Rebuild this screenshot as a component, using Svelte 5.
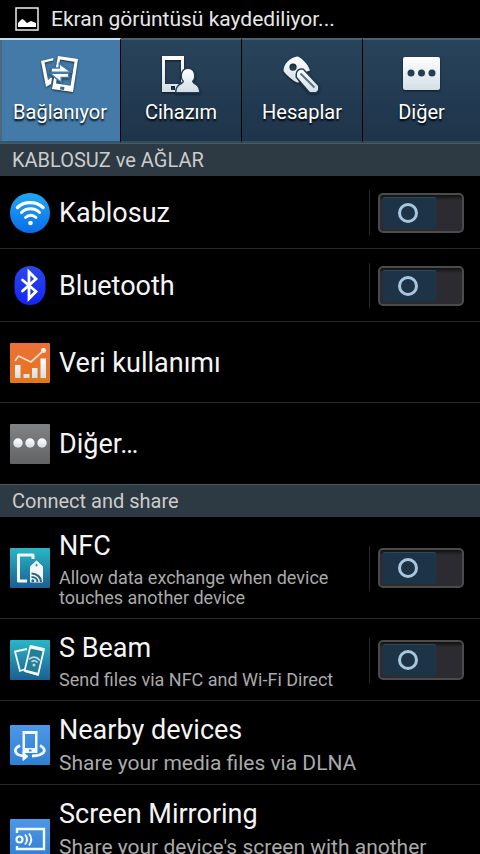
<script>
	let activeTab = $state('connections');

	const tabs = [
		{ id: 'connections', label: 'Bağlanıyor' },
		{ id: 'device', label: 'Cihazım' },
		{ id: 'accounts', label: 'Hesaplar' },
		{ id: 'more', label: 'Diğer' }
	];

	let sections = $state([
		{
			title: 'KABLOSUZ ve AĞLAR',
			items: [
				{ id: 'wifi', title: 'Kablosuz', toggle: true, on: false },
				{ id: 'bluetooth', title: 'Bluetooth', toggle: true, on: false },
				{ id: 'data', title: 'Veri kullanımı', tall: true },
				{ id: 'other', title: 'Diğer…', tall: true }
			]
		},
		{
			title: 'Connect and share',
			items: [
				{
					id: 'nfc',
					title: 'NFC',
					text: 'Allow data exchange when device touches another device',
					toggle: true,
					on: false
				},
				{
					id: 'sbeam',
					title: 'S Beam',
					text: 'Send files via NFC and Wi-Fi Direct',
					toggle: true,
					on: false
				},
				{
					id: 'nearby',
					title: 'Nearby devices',
					text: 'Share your media files via DLNA',
					large: true
				},
				{
					id: 'mirroring',
					title: 'Screen Mirroring',
					text: "Share your device's screen with another",
					large: true,
					long: true
				}
			]
		}
	]);
</script>

{#snippet tabIcon(id)}
	<svg class="tab-icon" viewBox="0 0 40 40" aria-hidden="true">
		{#if id === 'connections'}
			<path d="M1 7l12.500-3-.5 2.500-8.500 2L8 26l3-2.500 1 .5-1 6-5 3z" fill="#fff" />
			<path fill-rule="evenodd" d="M18 2l20 3-5 33-21-3zM20 5.500l-4 24 14.500 2.300 4-24z" fill="#fff" />
			<path d="M20.500 32.500l4 .6-.5 3-4-.6z" fill="#38688f" />
			<g class="cutout-active">
				<path d="M12 17.500v-2.700h8V11l9 6.500z" />
				<path d="M28 20v2.700h-7.500V27L12 20z" />
			</g>
		{:else if id === 'device'}
			<path fill-rule="evenodd" d="M1 2h22v36H1zM4 6v24h16V6zM10 32v4h4v-4z" fill="url(#metal)" />
			<path class="cutout" d="M27 15c4 0 6 3 6 7 0 3-1 4-2 5 0 4 7 3 7 11H15.500c0-8 7.500-7 7.500-11-1-1-2-2-2-5 0-4 2-7 6-7z" />
		{:else if id === 'accounts'}
			<path fill-rule="evenodd" d="M15 2.500c3 0 11 7 13 14l-3 1-8 6-.5 5.500C12 28 3 20 1.500 17 1.500 9.500 8 4 15 2.500zM11 9.500a3.600 3.600 0 1 0 .1 7.200 3.600 3.600 0 0 0-.1-7.200z" fill="url(#metal)" />
			<path class="cutout" d="M15 20c0-3 3-5 6-4l15 16v4l-2 2h-6L15 23z" />
			<path d="M18.500 19.500l14 14" stroke="#5b7182" stroke-width="2" />
		{:else}
			<rect x="1" y="3" width="37" height="33" rx="2" fill="url(#metal)" />
			<circle cx="9" cy="19" r="3.500" fill="#243d52" />
			<circle cx="19.500" cy="19" r="3.500" fill="#243d52" />
			<circle cx="30" cy="19" r="3.500" fill="#243d52" />
		{/if}
	</svg>
{/snippet}

{#snippet rowIcon(id)}
	<svg class="row-icon" viewBox="0 0 40 40" aria-hidden="true">
		{#if id === 'wifi'}
			<circle cx="20" cy="20" r="20" fill="url(#sky)" />
			<g fill="none" stroke="#fff" stroke-linecap="round">
				<path d="M7.500 14.500C14 8 26 8 33 14.500" stroke-width="3.400" />
				<path d="M11.500 19.500c5-5 13-5 18 0" stroke-width="3" />
				<path d="M15.500 24.500c3-3 7.500-3 10.500 0" stroke-width="2.800" />
			</g>
			<circle cx="20.500" cy="30" r="2.300" fill="#fff" />
		{:else if id === 'bluetooth'}
			<rect x="4.500" y="0" width="31" height="39" rx="15.500" fill="url(#blue)" />
			<path d="M12.500 14l13.500 11.500-7 7V6l7 7-13.500 12" fill="none" stroke="#fff" stroke-width="2.800" stroke-linejoin="miter" stroke-linecap="round" />
		{:else if id === 'data'}
			<rect width="40" height="40" rx="1" fill="url(#orange)" />
			<g fill="url(#metal)">
				<path d="M5 22h5.500v13H5zM13.500 31h6v4h-6zM22 25h5.500v10H22zM30.500 15.500H36V35h-5.500z" />
				<circle cx="33.500" cy="7.500" r="2.500" />
			</g>
			<path d="M5 18l3.500-5 12.500 6L33 8" fill="none" stroke="#f1dfd5" stroke-width="1.700" />
		{:else if id === 'other'}
			<rect width="40" height="40" rx="1" fill="url(#gray)" />
			<g fill="url(#metal)">
				<circle cx="8" cy="19" r="4.700" />
				<circle cx="20" cy="19" r="4.700" />
				<circle cx="32" cy="19" r="4.700" />
			</g>
		{:else if id === 'nfc'}
			<rect width="40" height="40" rx="1" fill="url(#teal)" />
			<path d="M23 11V7H8.500v26H17" fill="none" stroke="#f4f8fa" stroke-width="3" stroke-linejoin="round" />
			<path fill-rule="evenodd" d="M26.500 13l6 5.500V34H20.500V18.500zM26.500 15.500a1.600 1.600 0 1 0 .1 3.200 1.600 1.600 0 0 0-.1-3.200z" fill="#f4f8fa" stroke="#f4f8fa" stroke-linejoin="round" />
			<path d="M21.500 25.500c5 0 9.500 3.500 9.500 8.500M21.500 29c3.500 0 6 2 6 5" fill="none" stroke="#256786" stroke-width="2" />
			<circle cx="22.800" cy="32.700" r="1.500" fill="#256786" />
		{:else if id === 'sbeam'}
			<rect width="40" height="40" rx="1" fill="url(#teal)" />
			<path d="M17 9L5 11.500 10 31l4-1.500" fill="none" stroke="#f4f8fa" stroke-width="1.800" stroke-linejoin="round" />
			<path d="M20.500 6L34 9l-6 26-13.500-4z" fill="#237f98" stroke="#f4f8fa" stroke-width="1.800" stroke-linejoin="round" />
			<path d="M20.500 6L34 9v2.500L20 8.500zM15 29.500l13.500 3.500-.5 2.500-13-3.500z" fill="#f4f8fa" />
			<path d="M19 19.500c3-3.500 8-3 11 1M21.500 22c2-2 4.500-1.500 6 .5" fill="none" stroke="#c3d9e2" stroke-width="1.700" />
			<circle cx="24" cy="25" r="1.500" fill="#c3d9e2" />
		{:else if id === 'nearby'}
			<rect width="40" height="40" rx="1" fill="url(#azure)" />
			<path d="M10 20.500c-8 4-5 10 4 10.500M30 20.500c9 5 3 10-8 10.500" fill="none" stroke="#f4f8fa" stroke-width="2.800" />
			<path d="M13 27l5 4.500-5 4z" fill="#f4f8fa" stroke="#f4f8fa" stroke-linejoin="round" />
			<path fill-rule="evenodd" d="M12.500 6h15v22h-15zM15 9v14h10V9zM19 24.500v2h2.500v-2z" fill="#f4f8fa" />
		{:else}
			<rect width="40" height="40" rx="1" fill="url(#azure)" />
			<path d="M7 14v-4h27v20H7v-3" fill="none" stroke="#f4f8fa" stroke-width="2.400" />
			<circle cx="9.500" cy="20.500" r="3" fill="none" stroke="#f4f8fa" stroke-width="2.200" />
			<path d="M15 15.500c2.500 3 2.500 7 0 10M19 14.500c3 4 3 8 0 12" fill="none" stroke="#f4f8fa" stroke-width="1.900" />
		{/if}
	</svg>
{/snippet}

{#snippet gradient(id, from, to)}
	<linearGradient {id} x1="0" y1="0" x2="0" y2="1">
		<stop offset="0" stop-color={from} />
		<stop offset="1" stop-color={to} />
	</linearGradient>
{/snippet}

<svg class="defs" width="0" height="0" aria-hidden="true">
	<defs>
		{@render gradient('metal', '#ffffff', '#d3dfe6')}
		{@render gradient('sky', '#20a8f5', '#096de9')}
		{@render gradient('blue', '#2949e8', '#1424f5')}
		{@render gradient('orange', '#ec7138', '#e37618')}
		{@render gradient('gray', '#818284', '#626365')}
		{@render gradient('teal', '#28b7c7', '#1b5f91')}
		{@render gradient('azure', '#4c98e5', '#307fd4')}
	</defs>
</svg>

<div class="screen">
	<header class="status-bar">
		<svg class="status-icon" viewBox="0 0 24 24" aria-hidden="true">
			<rect x="1" y="1" width="22" height="22" fill="none" stroke="#eee" stroke-width="1.500" />
			<path d="M3 20v-4l4-4 2 1 3 3 4-2 5 2v4z" fill="#fff" />
		</svg>
		<span>Ekran görüntüsü kaydediliyor...</span>
	</header>

	<div class="tabs" role="tablist">
		{#each tabs as tab}
			<button
				class="tab"
				class:active={activeTab === tab.id}
				role="tab"
				aria-selected={activeTab === tab.id}
				onclick={() => (activeTab = tab.id)}
			>
				{@render tabIcon(tab.id)}
				<span>{tab.label}</span>
			</button>
		{/each}
	</div>

	<main>
		{#each sections as section}
			<section>
				<h2>{section.title}</h2>
				<ul>
					{#each section.items as item}
						<li class="row" class:tall={item.tall} class:large={item.large} class:long={item.long}>
							{@render rowIcon(item.id)}
							<div class="row-text">
								{#if item.toggle}
									<label class="title" for={item.id}>{item.title}</label>
								{:else}
									<span class="title">{item.title}</span>
								{/if}
								{#if item.text}
									<p>{item.text}</p>
								{/if}
							</div>
							{#if item.toggle}
								<div class="toggle">
									<input type="checkbox" role="switch" id={item.id} bind:checked={item.on} />
								</div>
							{/if}
						</li>
					{/each}
				</ul>
			</section>
		{/each}
	</main>
</div>

<style>
	:global(body) {
		background: #000;
	}

	.defs {
		position: absolute;
	}

	.screen {
		height: 100vh;
		overflow: hidden;
		background: #000;
		color: #f5f5f5;
		font-family: Roboto, sans-serif;
	}

	.status-bar {
		display: flex;
		align-items: center;
		gap: 12px;
		height: 38px;
		padding: 0 15px;
		color: #e6e6e6;
		font-size: 21px;
		line-height: 24px;
	}

	.status-icon {
		width: 24px;
		height: 24px;
	}

	.tabs {
		display: grid;
		grid-template-columns: 121fr 121fr 121fr 117fr;
	}

	.tab {
		display: flex;
		flex-direction: column;
		align-items: center;
		gap: 6px;
		height: 105px;
		padding: 14px 0 0;
		border: 0;
		border-top: 2px solid #4a606f;
		border-right: 1px solid #000;
		border-bottom: 2px solid #334c5d;
		background: linear-gradient(#28445a, #1e344b);
		color: #fff;
		font-family: inherit;
		font-size: 20px;
		line-height: 24px;
		text-shadow: 0 2px 2px #000;
		cursor: pointer;
	}

	.tab:last-child {
		border-right: 0;
	}

	.tab.active {
		border-top-color: #c9dceb;
		border-bottom-color: #315777;
		background: #447aa7;
		box-shadow: inset 2px 0 #4a687c;
	}

	.tab-icon {
		width: 40px;
		height: 40px;
		filter: drop-shadow(0 1px 1px rgba(0, 0, 0, 0.6));
	}

	/* shapes that sit on top of another one with a gap around them */
	.cutout {
		fill: url(#metal);
		stroke: #243d52;
		stroke-width: 3px;
		paint-order: stroke;
	}

	.cutout-active {
		fill: #fff;
		stroke: #447aa7;
		stroke-width: 3px;
		paint-order: stroke;
	}

	h2 {
		margin: 0;
		padding: 4px 12px;
		border-top: 1px solid #4a5963;
		background: #2d3943;
		color: #ccc;
		font-size: 20px;
		font-weight: 400;
		line-height: 24px;
	}

	ul {
		margin: 0;
		padding: 0;
		list-style: none;
	}

	.row {
		display: flex;
		align-items: center;
		gap: 9px;
		box-sizing: border-box;
		min-height: 73px;
		padding: 11px 16px 10px 10px;
		border-bottom: 1px solid #292929;
	}

	.row.tall {
		min-height: 81px;
	}

	.row.large {
		padding-bottom: 7px;
	}

	.row:last-child {
		border-bottom: 0;
	}

	.row-icon {
		flex: none;
		width: 40px;
		height: 40px;
	}

	.row-text {
		flex: 1;
	}

	.title {
		display: block;
		font-size: 27px;
		line-height: 36px;
	}

	p {
		margin: 4px 0 0;
		color: #aaa;
		font-size: 18px;
		line-height: 20px;
	}

	.large p {
		margin-top: 1px;
		font-size: 21px;
		line-height: 28px;
	}

	.long p {
		min-height: 48px;
	}

	.toggle {
		display: flex;
		align-items: center;
		height: 45px;
		padding-left: 8px;
		border-left: 1px solid #292929;
	}

	.toggle input {
		position: relative;
		width: 86px;
		height: 40px;
		margin: 0;
		padding: 2px 3px;
		border: 2px solid #4b4b4c;
		border-radius: 5px;
		background: linear-gradient(#111, #2b2b31 5px);
		appearance: none;
		cursor: pointer;
		box-sizing: border-box;
	}

	.toggle input::before {
		display: block;
		width: 53px;
		height: 32px;
		border-radius: 2px;
		background: #1c3445;
		box-shadow: inset 0 1px #2c475a;
		content: '';
	}

	.toggle input::after {
		position: absolute;
		top: 8px;
		left: 18px;
		width: 14px;
		height: 14px;
		border: 3px solid #a9c6df;
		border-radius: 50%;
		content: '';
	}

	.toggle input:checked::before {
		margin-left: auto;
		background: #2c6ea2;
	}

	.toggle input:checked::after {
		right: 18px;
		left: auto;
	}
</style>
